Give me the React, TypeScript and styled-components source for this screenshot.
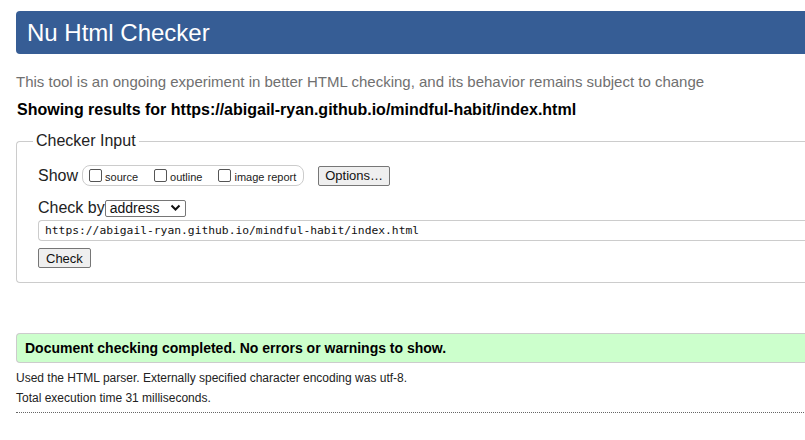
import styled, { createGlobalStyle } from 'styled-components';

const Global = createGlobalStyle`
  html, body {
    margin: 0;
    padding: 0;
    overflow: hidden;
    background: #fff;
  }
  body {
    font-family: 'Liberation Sans', Arial, sans-serif;
    color: #000;
  }
`;

const Page = styled.div`
  width: 900px;
  padding: 11px 0 0 16px;
`;

const Header = styled.h1`
  margin: 0;
  height: 43px;
  background: #365d95;
  border-radius: 4px 0 0 4px;
  color: #fff;
  font-size: 24px;
  font-weight: 400;
  line-height: 43px;
  padding-left: 11px;
`;

const Intro = styled.p`
  margin: 19px 0 0;
  font-size: 15px;
  line-height: 18px;
  color: #707070;
`;

const Results = styled.h2`
  margin: 10px 0 0 1px;
  font-size: 16px;
  line-height: 18px;
  font-weight: 700;
`;

const Form = styled.fieldset`
  margin: 13px 0 0;
  padding: 5px 0 14px 21px;
  border: 1px solid #ccc;
  border-right: none;
  border-radius: 4px 0 0 4px;
`;

const Legend = styled.legend`
  font-size: 16px;
  padding: 0 3px 0 3px;
  margin-left: -5px;
  color: #222;
`;

const Row = styled.div<{ gap?: number; top?: number }>`
  display: flex;
  align-items: center;
  gap: ${p => p.gap ?? 4}px;
  margin-top: ${p => p.top ?? 0}px;
`;

const Label = styled.span`
  font-size: 16px;
  color: #222;
`;

const ShowGroup = styled.div`
  display: flex;
  align-items: center;
  height: 19px;
  padding: 0 7px 0 6px;
  border: 1px solid #ccc;
  border-radius: 8px;
  gap: 16px;
`;

const Opt = styled.label`
  display: flex;
  align-items: center;
  font-size: 11px;
  color: #222;
  padding-top: 2px;
`;

const Box = styled.span`
  display: inline-block;
  width: 11px;
  height: 11px;
  border: 1px solid #555;
  border-radius: 2px;
  margin: -3px 3px 0 0;
  background: #fff;
`;

const Btn = styled.button<{ h?: number; px?: number; ml?: number }>`
  font-family: 'Liberation Sans', Arial, sans-serif;
  font-size: 13px;
  color: #111;
  background: #efefef;
  border: 1px solid #767676;
  border-radius: 2px;
  height: ${p => p.h ?? 20}px;
  padding: 0 ${p => p.px ?? 7}px;
  margin-left: ${p => p.ml ?? 0}px;
`;

const Select = styled.div`
  display: flex;
  align-items: center;
  justify-content: space-between;
  width: 81px;
  height: 17px;
  box-sizing: border-box;
  border: 1px solid #767676;
  border-radius: 2px;
  padding: 0 4px 0 4px;
  font-size: 14px;
  color: #111;
`;

const UrlInput = styled.div`
  margin-top: 3px;
  height: 21px;
  box-sizing: border-box;
  border: 1px solid #ccc;
  border-right: none;
  border-radius: 4px 0 0 4px;
  font-family: 'DejaVu Sans Mono', monospace;
  font-size: 11.3px;
  line-height: 19px;
  padding-left: 6px;
  color: #111;
`;

const Success = styled.div`
  margin-top: 50px;
  height: 30px;
  box-sizing: border-box;
  background: #ccffcc;
  border: 1px solid #ccc;
  border-right: none;
  border-radius: 4px 0 0 4px;
  font-size: 14px;
  font-weight: 700;
  line-height: 28px;
  padding-left: 8px;
`;

const Note = styled.p<{ top?: number }>`
  margin: ${p => p.top ?? 6}px 0 0;
  font-size: 12px;
  line-height: 14px;
  color: #222;
`;

const Rule = styled.hr`
  margin: 7px 0 0;
  border: none;
  border-top: 1px dotted #666;
`;

export default function App() {
  return (
    <>
      <Global />
      <Page>
        <Header>Nu Html Checker</Header>
        <Intro>This tool is an ongoing experiment in better HTML checking, and its behavior remains subject to change</Intro>
        <Results>Showing results for https://abigail-ryan.github.io/mindful-habit/index.html</Results>
        <Form>
          <Legend>Checker Input</Legend>
          <Row top={10} gap={4}>
            <Label>Show</Label>
            <ShowGroup>
              <Opt><Box />source</Opt>
              <Opt><Box />outline</Opt>
              <Opt><Box />image report</Opt>
            </ShowGroup>
            <Btn ml={10} px={6}>Options…</Btn>
          </Row>
          <Row top={13} gap={0}>
            <Label>Check by</Label>
            <Select>
              address
              <svg width="11" height="8" viewBox="0 0 11 8">
                <path d="M1.5 1.5 L5.5 5.5 L9.5 1.5" fill="none" stroke="#111" strokeWidth="2" />
              </svg>
            </Select>
          </Row>
          <UrlInput>https://abigail-ryan.github.io/mindful-habit/index.html</UrlInput>
          <Row top={7}>
            <Btn px={7}>Check</Btn>
          </Row>
        </Form>
        <Success>Document checking completed. No errors or warnings to show.</Success>
        <Note top={8}>Used the HTML parser. Externally specified character encoding was utf-8.</Note>
        <Note top={6}>Total execution time 31 milliseconds.</Note>
        <Rule />
      </Page>
    </>
  );
}
